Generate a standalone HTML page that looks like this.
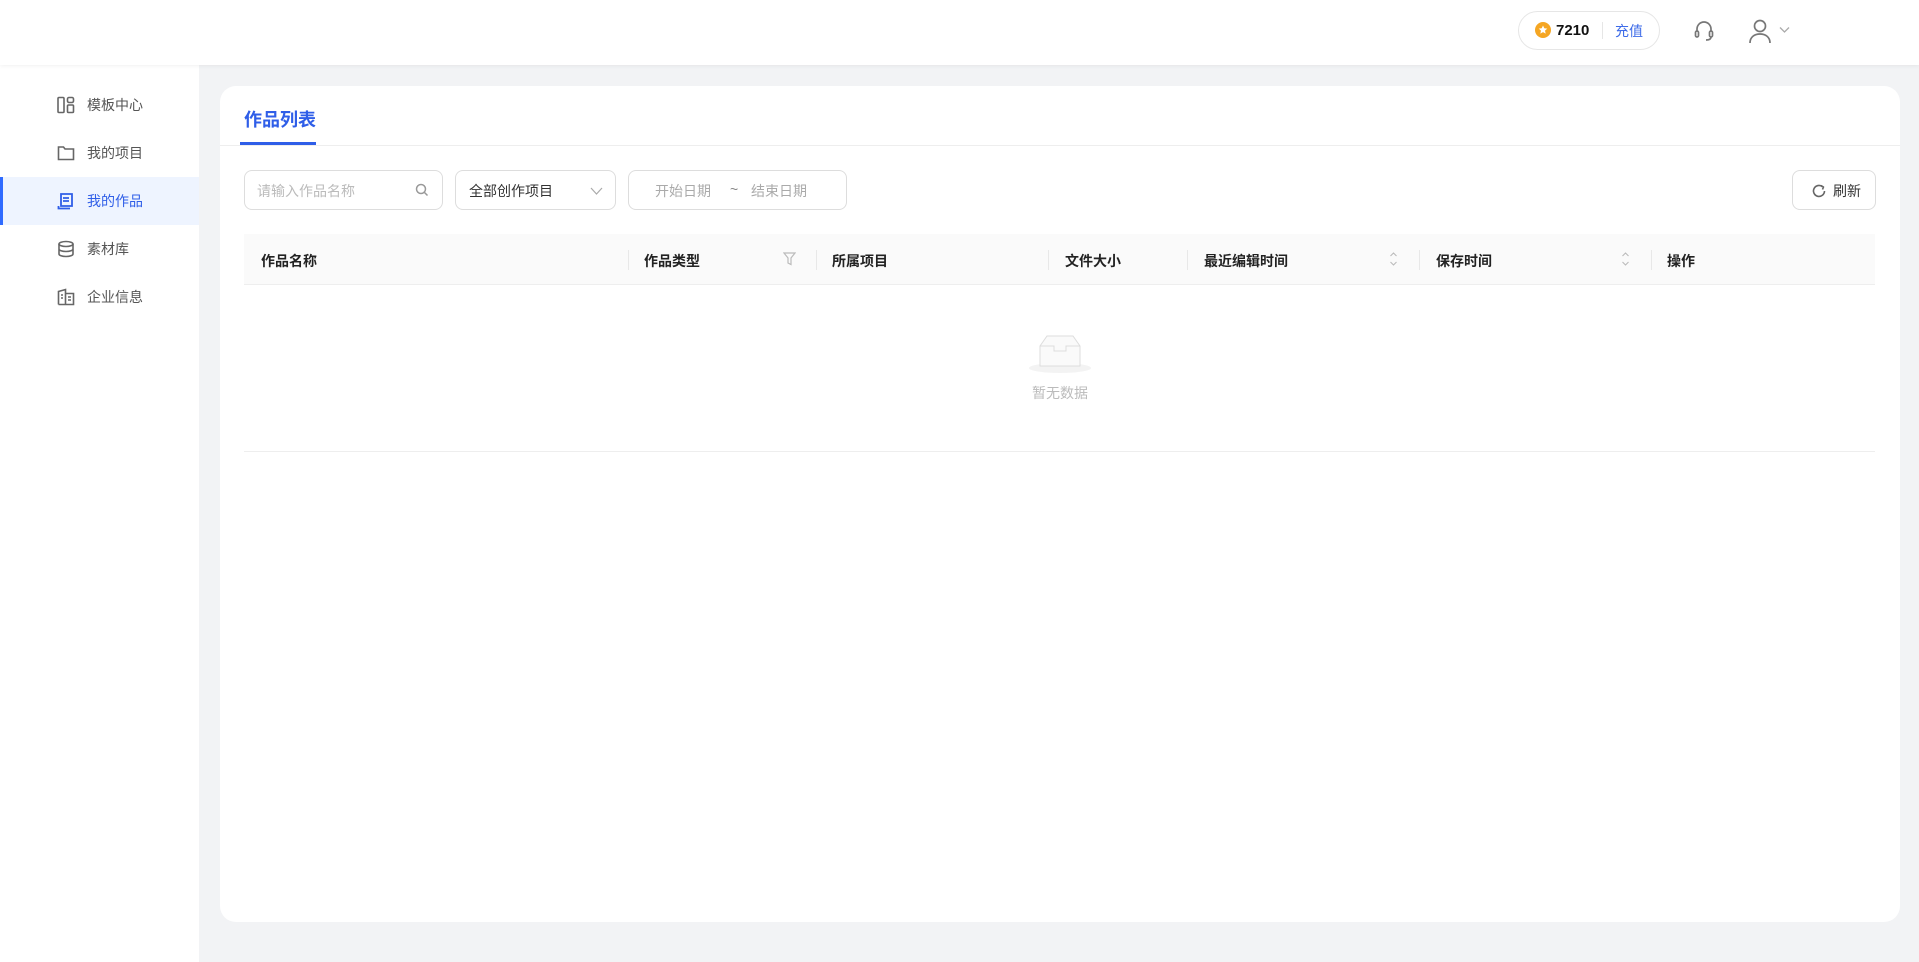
<!DOCTYPE html>
<html><head><meta charset="utf-8"><style>
*{box-sizing:border-box;margin:0;padding:0}
body{width:1919px;height:962px;background:#f2f3f5;font-family:"Liberation Sans","Noto Sans CJK SC",sans-serif;position:relative;overflow:hidden;color:#333}
.hdr{position:absolute;left:0;top:0;width:1919px;height:65px;background:#fff;box-shadow:0 1px 4px rgba(0,0,0,.06);z-index:2}
.side{position:absolute;left:0;top:65px;width:199px;height:897px;background:#fff}
.item{position:absolute;left:0;width:199px;height:48px;display:flex;align-items:center;font-size:14px;color:#555}
.item svg{position:absolute;left:57px}
.item span{position:absolute;left:87px}
.item.act{background:#eef4ff;color:#2f5ee8}
.item.act:before{content:"";position:absolute;left:0;top:0;width:3px;height:48px;background:#2f6bff}
.card{position:absolute;left:220px;top:86px;width:1680px;height:836px;background:#fff;border-radius:16px}
.abs{position:absolute}
.box{position:absolute;border:1px solid #ddd;border-radius:8px;height:40px;top:84px;font-size:14px}
.box span{position:absolute;top:10px}
.th{position:absolute;top:148px;height:51px;left:24px;width:1631px;background:#fafafa;border-bottom:1px solid #eee}
.th b{position:absolute;top:17px;font-size:14px;color:#222}
.sep{position:absolute;top:16px;width:1px;height:20px;background:#e8e8e8}
.sort{position:absolute;top:15px}
</style></head><body>
<div class="hdr">
 <div class="abs" style="left:1518px;top:11px;width:142px;height:39px;border:1px solid #e6e6e6;border-radius:20px"></div>
 <svg class="abs" style="left:1535px;top:22px" width="16" height="16" viewBox="0 0 16 16"><circle cx="8" cy="8" r="8" fill="#f5a623"/><path d="M8 3.5l1.3 2.8 3 .3-2.3 2 .7 3L8 10.1 5.3 11.6l.7-3-2.3-2 3-.3z" fill="#fff"/></svg>
 <div class="abs" style="left:1556px;top:22px;font-size:15px;font-weight:bold;color:#111">7210</div>
 <div class="abs" style="left:1602px;top:22px;width:1px;height:17px;background:#e6e6e6"></div>
 <div class="abs" style="left:1615px;top:21px;font-size:14px;color:#3d6be8">充值</div>
 <svg class="abs" style="left:1693px;top:19px" width="22" height="24" viewBox="0 0 22 24" fill="none" stroke="#777" stroke-width="1.7"><path d="M4 13V10a7 7 0 0 1 14 0v3"/><rect x="2.5" y="12" width="3" height="6" rx="1.5"/><rect x="16.5" y="12" width="3" height="6" rx="1.5"/><path d="M18 18c0 2-2 3-5 3"/></svg>
 <svg class="abs" style="left:1748px;top:18px" width="24" height="26" viewBox="0 0 24 26" fill="none" stroke="#777" stroke-width="1.7"><circle cx="12" cy="8" r="5.5"/><path d="M2 25c0-6 4.5-9 10-9s10 3 10 9"/></svg>
 <svg class="abs" style="left:1779px;top:26px" width="11" height="8" viewBox="0 0 11 8" fill="none" stroke="#aaa" stroke-width="1.3"><path d="M1 1.5l4.5 4.5 4.5-4.5"/></svg>
</div>
<div class="side">
 <div class="item" style="top:16px"><svg width="18" height="18" viewBox="0 0 18 18" fill="none" stroke="#666" stroke-width="1.6"><rect x="1" y="1.5" width="6" height="15" rx="1"/><rect x="10.5" y="1.5" width="6" height="5" rx="1.5"/><rect x="10.5" y="9" width="6" height="7.5" rx="1"/></svg><span>模板中心</span></div>
 <div class="item" style="top:64px"><svg width="18" height="18" viewBox="0 0 18 18" fill="none" stroke="#666" stroke-width="1.6"><path d="M1.5 3h5l1.5 2h8.5v10.5h-15z"/></svg><span>我的项目</span></div>
 <div class="item act" style="top:112px"><svg width="18" height="18" viewBox="0 0 18 18" fill="none" stroke="#2f5ee8" stroke-width="1.8"><path d="M4 2h11v12H4zM6 6h6M6 9h6M1.5 14v2.5H13"/></svg><span>我的作品</span></div>
 <div class="item" style="top:160px"><svg width="18" height="18" viewBox="0 0 18 18" fill="none" stroke="#666" stroke-width="1.6"><ellipse cx="9" cy="4" rx="7" ry="2.5"/><path d="M2 4v10c0 1.4 3 2.5 7 2.5s7-1.1 7-2.5V4M2 9c0 1.4 3 2.5 7 2.5s7-1.1 7-2.5"/></svg><span>素材库</span></div>
 <div class="item" style="top:208px"><svg width="18" height="18" viewBox="0 0 18 18" fill="none" stroke="#666" stroke-width="1.6"><path d="M1.5 16.5V3.5l7-2v15M8.5 5.5h8v11h-15M11 9h3M11 12h3M4 7h2M4 10h2"/></svg><span>企业信息</span></div>
</div>
<div class="card">
 <div class="abs" style="left:24px;top:20px;font-size:18px;font-weight:bold;color:#2f5ee8">作品列表</div>
 <div class="abs" style="left:20px;top:56px;width:76px;height:3px;background:#2f5ee8"></div>
 <div class="abs" style="left:0;top:59px;width:1680px;height:1px;background:#eee"></div>
 <div class="box" style="left:24px;width:199px;color:#bbb"><span style="left:12px">请输入作品名称</span>
  <svg class="abs" style="left:170px;top:12px" width="14" height="14" viewBox="0 0 14 14" fill="none" stroke="#999" stroke-width="1.5"><circle cx="6" cy="6" r="4.5"/><path d="M9.5 9.5l3 3"/></svg></div>
 <div class="box" style="left:235px;width:161px;color:#333"><span style="left:13px">全部创作项目</span>
  <svg class="abs" style="left:134px;top:16px" width="13" height="8" viewBox="0 0 13 8" fill="none" stroke="#aaa" stroke-width="1.2"><path d="M1 1l5.5 6L12 1"/></svg></div>
 <div class="box" style="left:408px;width:219px;color:#aaa"><span style="left:26px">开始日期</span><span style="left:101px;color:#888">~</span><span style="left:122px">结束日期</span></div>
 <div class="box" style="left:1572px;width:84px;color:#333"><span style="left:40px">刷新</span>
  <svg class="abs" style="left:18px;top:12px" width="16" height="16" viewBox="0 0 16 16" fill="none" stroke="#666" stroke-width="1.6"><path d="M13.5 8a5.5 5.5 0 1 1-2-4.3"/><path d="M10 2.5l2.5 1.5-1 2.5" stroke-linejoin="round"/></svg></div>
 <div class="th">
  <b style="left:17px">作品名称</b>
  <div class="sep" style="left:384px"></div><b style="left:400px">作品类型</b>
  <svg class="abs" style="left:539px;top:18px" width="13" height="14" viewBox="0 0 13 14" fill="none" stroke="#bbb" stroke-width="1.2"><path d="M1 1h11L8 6v6.5L5 11V6z"/></svg>
  <div class="sep" style="left:572px"></div><b style="left:588px">所属项目</b>
  <div class="sep" style="left:804px"></div><b style="left:821px">文件大小</b>
  <div class="sep" style="left:943px"></div><b style="left:960px">最近编辑时间</b>
  <svg class="sort" style="left:1145px" width="9" height="20" viewBox="0 0 9 20" fill="none" stroke="#bbb" stroke-width="1.1"><path d="M1.5 7l3-3 3 3M1.5 13l3 3 3-3"/></svg>
  <div class="sep" style="left:1175px"></div><b style="left:1192px">保存时间</b>
  <svg class="sort" style="left:1377px" width="9" height="20" viewBox="0 0 9 20" fill="none" stroke="#bbb" stroke-width="1.1"><path d="M1.5 7l3-3 3 3M1.5 13l3 3 3-3"/></svg>
  <div class="sep" style="left:1407px"></div><b style="left:1423px">操作</b>
 </div>
 <svg class="abs" style="left:808px;top:244px" width="64" height="44" viewBox="0 0 64 44"><ellipse cx="32" cy="38" rx="31" ry="5" fill="#f3f3f3"/><path d="M12 16l7-10h26l7 10v20H12z" fill="#fafafa" stroke="#ddd"/><path d="M12 16h14v5h12v-5h14" fill="none" stroke="#ddd"/></svg>
 <div class="abs" style="left:812px;top:297px;font-size:14px;color:#bbb">暂无数据</div>
 <div class="abs" style="left:24px;top:365px;width:1631px;height:1px;background:#eee"></div>
</div>
</body></html>
